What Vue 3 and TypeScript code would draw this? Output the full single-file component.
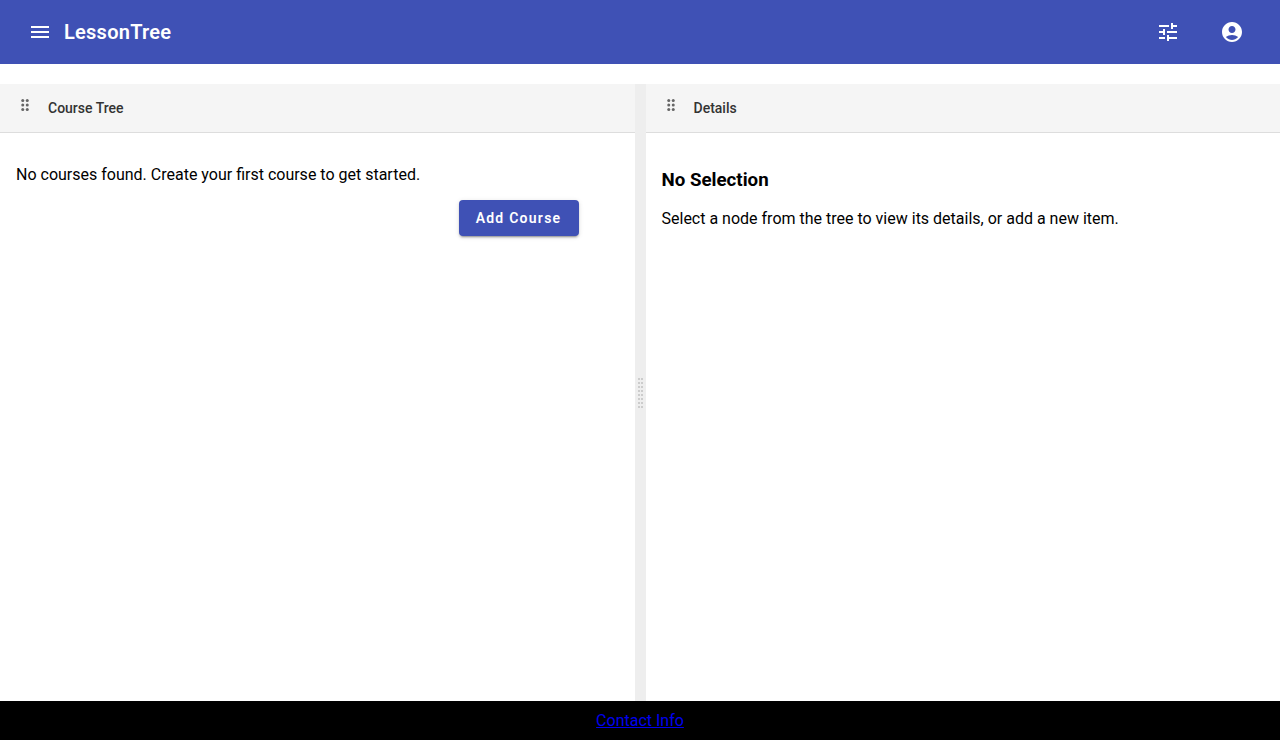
<script setup lang="ts">
interface Dot {
  cx: number
  cy: number
}

const gripDots: Dot[] = [6, 12, 18].flatMap((cy) => [{ cx: 9, cy }, { cx: 15, cy }])
const gutterDots = 16
</script>

<template>
  <div class="page">
    <header class="toolbar">
      <button class="icon-button" aria-label="Menu">
        <svg viewBox="0 0 24 24"><path d="M3 18h18v-2H3v2zm0-5h18v-2H3v2zm0-7v2h18V6H3z" /></svg>
      </button>
      <span class="brand">LessonTree</span>
      <span class="spacer"></span>
      <nav class="actions">
        <button class="icon-button" aria-label="Settings">
          <svg viewBox="0 0 24 24">
            <path d="M3 17v2h6v-2H3zM3 5v2h10V5H3zm10 16v-2h8v-2h-8v-2h-2v6h2zM7 9v2H3v2h4v2h2V9H7zm14 4v-2H11v2h10zm-6-4h2V7h4V5h-4V3h-2v6z" />
          </svg>
        </button>
        <button class="icon-button" aria-label="Account">
          <svg viewBox="0 0 24 24">
            <path d="M12 2C6.48 2 2 6.48 2 12s4.48 10 10 10 10-4.48 10-10S17.52 2 12 2zm0 4c1.93 0 3.5 1.57 3.5 3.5S13.93 13 12 13s-3.5-1.57-3.5-3.5S10.07 6 12 6zm0 14c-2.03 0-4.43-.82-6.14-2.88C7.55 15.8 9.68 15 12 15s4.45.8 6.14 2.12C16.43 19.18 14.03 20 12 20z" />
          </svg>
        </button>
      </nav>
    </header>

    <main class="split">
      <section class="panel">
        <div class="panel-header">
          <svg class="grip" viewBox="0 0 24 24">
            <circle v-for="(d, i) in gripDots" :key="i" :cx="d.cx" :cy="d.cy" r="2" />
          </svg>
          <span>Course Tree</span>
        </div>
        <div class="tree-body">
          <p>No courses found. Create your first course to get started.</p>
          <button class="add">Add Course</button>
        </div>
      </section>
      <div class="gutter">
        <div class="gutter-dots"><i v-for="n in gutterDots" :key="n"></i></div>
      </div>
      <section class="panel">
        <div class="panel-header">
          <svg class="grip" viewBox="0 0 24 24">
            <circle v-for="(d, i) in gripDots" :key="i" :cx="d.cx" :cy="d.cy" r="2" />
          </svg>
          <span>Details</span>
        </div>
        <div class="details-body">
          <h3>No Selection</h3>
          <p>Select a node from the tree to view its details, or add a new item.</p>
        </div>
      </section>
    </main>

    <footer class="footer"><a href="#">Contact Info</a></footer>
  </div>
</template>

<style>
body {
  margin: 0;
}
</style>

<style scoped>
.page {
  display: flex;
  flex-direction: column;
  height: 100vh;
  overflow: hidden;
  background: #fff;
  color: #000;
  font-family: Roboto, "Liberation Sans", sans-serif;
  font-size: 16px;
}
.toolbar {
  display: flex;
  align-items: center;
  flex: 0 0 64px;
  box-sizing: border-box;
  padding: 0 24px 0 16px;
  background: #3f51b5;
  color: #fff;
}
.icon-button {
  display: flex;
  align-items: center;
  justify-content: center;
  width: 48px;
  height: 48px;
  padding: 0;
  border: 0;
  background: none;
  color: inherit;
}
.icon-button svg {
  width: 24px;
  height: 24px;
  fill: currentColor;
}
.brand {
  font-size: 20px;
  font-weight: 600;
  letter-spacing: 0.25px;
  line-height: 32px;
}
.spacer {
  flex: 1;
}
.actions {
  display: flex;
  gap: 16px;
}
.split {
  display: flex;
  flex: 1;
  min-height: 0;
  margin-top: 20px;
}
.panel {
  flex: 1 1 0;
  min-width: 0;
}
.panel-header {
  display: flex;
  align-items: center;
  box-sizing: border-box;
  height: 49px;
  padding: 0 16px;
  border-bottom: 1px solid #ddd;
  background: #f5f5f5;
  color: #333;
  font-size: 14px;
  font-weight: 500;
}
.grip {
  width: 18px;
  height: 18px;
  margin: 0 14px 6px 0;
  fill: #666;
}
.tree-body {
  display: flex;
  flex-direction: column;
  padding: 32px 56px 0 16px;
}
.tree-body p {
  margin: 0 0 16px;
  line-height: 19px;
}
.add {
  align-self: flex-end;
  width: 120px;
  height: 36px;
  padding: 0;
  border: 0;
  border-radius: 4px;
  background: #3f51b5;
  box-shadow: 0 3px 1px -2px rgba(0, 0, 0, 0.2), 0 2px 2px rgba(0, 0, 0, 0.14), 0 1px 5px rgba(0, 0, 0, 0.12);
  color: #fff;
  font: 600 14px Roboto, "Liberation Sans", sans-serif;
  letter-spacing: 1.25px;
}
.gutter {
  display: flex;
  align-items: center;
  justify-content: center;
  flex: 0 0 11px;
  background: #eee;
}
.gutter-dots {
  display: grid;
  grid-template-columns: 2px 2px;
  grid-auto-rows: 2px;
  gap: 2px 1px;
}
.gutter-dots i {
  background: #ccc;
}
.details-body {
  padding: 36px 16px 0;
}
.details-body h3 {
  margin: 0 0 18px;
  font-size: 18.72px;
  font-weight: 700;
  line-height: 22px;
}
.details-body p {
  margin: 0;
  line-height: 19px;
}
.footer {
  display: flex;
  align-items: center;
  justify-content: center;
  flex: 0 0 39px;
  background: #000;
}
.footer a {
  color: #0000ee;
  line-height: 19px;
}
</style>
